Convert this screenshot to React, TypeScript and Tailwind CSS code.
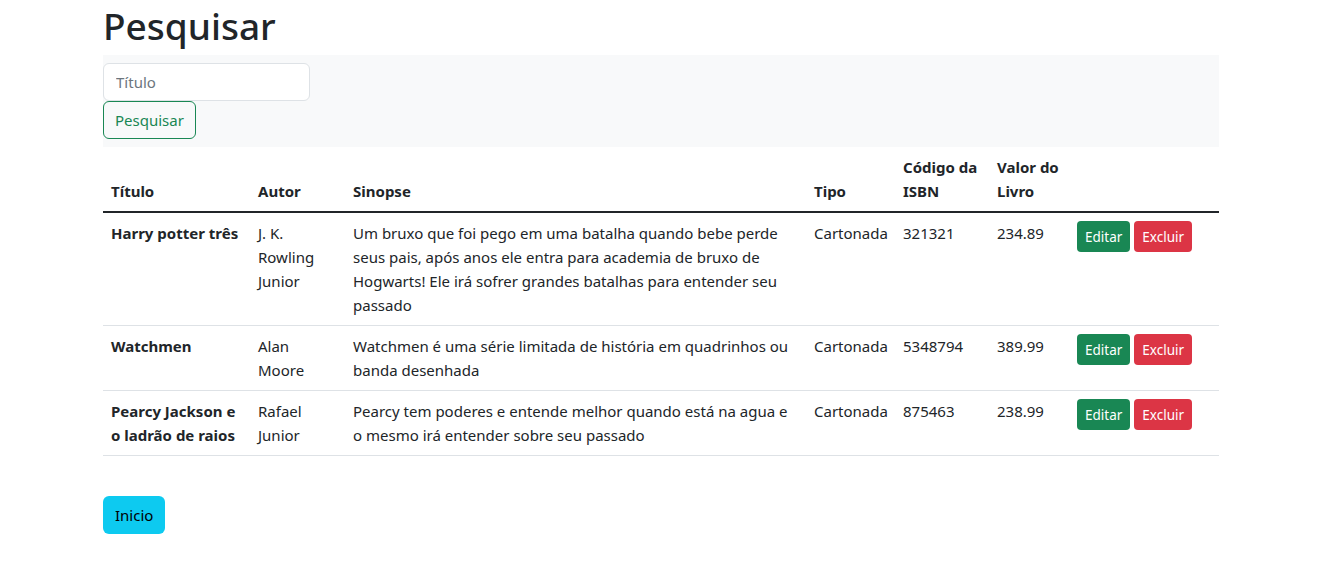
import React from "react";

const rows = [
  {
    titulo: ["Harry potter três"],
    autor: ["J. K.", "Rowling", "Junior"],
    sinopse: [
      "Um bruxo que foi pego em uma batalha quando bebe perde",
      "seus pais, após anos ele entra para academia de bruxo de",
      "Hogwarts! Ele irá sofrer grandes batalhas para entender seu",
      "passado",
    ],
    tipo: "Cartonada",
    isbn: "321321",
    valor: "234.89",
  },
  {
    titulo: ["Watchmen"],
    autor: ["Alan", "Moore"],
    sinopse: [
      "Watchmen é uma série limitada de história em quadrinhos ou",
      "banda desenhada",
    ],
    tipo: "Cartonada",
    isbn: "5348794",
    valor: "389.99",
  },
  {
    titulo: ["Pearcy Jackson e", "o ladrão de raios"],
    autor: ["Rafael", "Junior"],
    sinopse: [
      "Pearcy tem poderes e entende melhor quando está na agua e",
      "o mesmo irá entender sobre seu passado",
    ],
    tipo: "Cartonada",
    isbn: "875463",
    valor: "238.99",
  },
];

function Lines({ lines }: { lines: string[] }) {
  return (
    <>
      {lines.map((l, i) => (
        <div key={i} className="whitespace-nowrap">
          {l}
        </div>
      ))}
    </>
  );
}

export default function App() {
  return (
    <div
      className="min-h-[585px] bg-white text-[#212529] text-[15px] leading-6"
      style={{ fontFamily: '"Segoe UI", "Noto Sans", "Open Sans", sans-serif' }}
    >
      <div className="mx-auto w-[1116px]">
        <h1 className="text-[37px] leading-[48px] font-medium pt-[2px] mb-[5px]">Pesquisar</h1>
        <div className="bg-[#f8f9fa] pt-2 pb-2 flex flex-col items-start">
          <input
            type="text"
            placeholder="Título"
            className="w-[207px] h-[38px] px-3 py-[6px] bg-white border border-[#dee2e6] rounded-[6px] text-[15px] placeholder:text-[#6c757d] outline-none"
          />
          <button className="h-[38px] px-[11px] border border-[#198754] text-[#198754] rounded-[6px] text-[15px] bg-transparent">
            Pesquisar
          </button>
        </div>
        <table className="w-full table-fixed border-collapse">
          <colgroup>
            <col className="w-[147px]" />
            <col className="w-[95px]" />
            <col className="w-[461px]" />
            <col className="w-[89px]" />
            <col className="w-[94px]" />
            <col className="w-[80px]" />
            <col className="w-[150px]" />
          </colgroup>
          <thead>
            <tr className="border-b-2 border-[#212529] text-left align-bottom">
              <th className="p-2 font-bold">Título</th>
              <th className="p-2 font-bold">Autor</th>
              <th className="p-2 font-bold">Sinopse</th>
              <th className="p-2 font-bold">Tipo</th>
              <th className="p-2 font-bold">
                <div className="whitespace-nowrap">Código da</div>
                <div>ISBN</div>
              </th>
              <th className="p-2 font-bold">
                <div className="whitespace-nowrap">Valor do</div>
                <div>Livro</div>
              </th>
              <th className="p-2"></th>
            </tr>
          </thead>
          <tbody>
            {rows.map((r, i) => (
              <tr key={i} className="border-b border-[#dee2e6] align-top">
                <td className="p-2 font-bold">
                  <Lines lines={r.titulo} />
                </td>
                <td className="p-2">
                  <Lines lines={r.autor} />
                </td>
                <td className="p-2">
                  <Lines lines={r.sinopse} />
                </td>
                <td className="p-2">{r.tipo}</td>
                <td className="p-2">{r.isbn}</td>
                <td className="p-2">{r.valor}</td>
                <td className="p-2">
                  <div className="flex gap-1">
                    <button className="h-[31px] px-2 rounded-[4px] bg-[#198754] text-white text-[13.5px]">
                      Editar
                    </button>
                    <button className="h-[31px] px-2 rounded-[4px] bg-[#dc3545] text-white text-[13.5px]">
                      Excluir
                    </button>
                  </div>
                </td>
              </tr>
            ))}
          </tbody>
        </table>
        <div className="mt-10">
          <button className="h-[38px] px-3 rounded-[6px] bg-[#0dcaf0] text-black text-[15px]">
            Inicio
          </button>
        </div>
      </div>
    </div>
  );
}
